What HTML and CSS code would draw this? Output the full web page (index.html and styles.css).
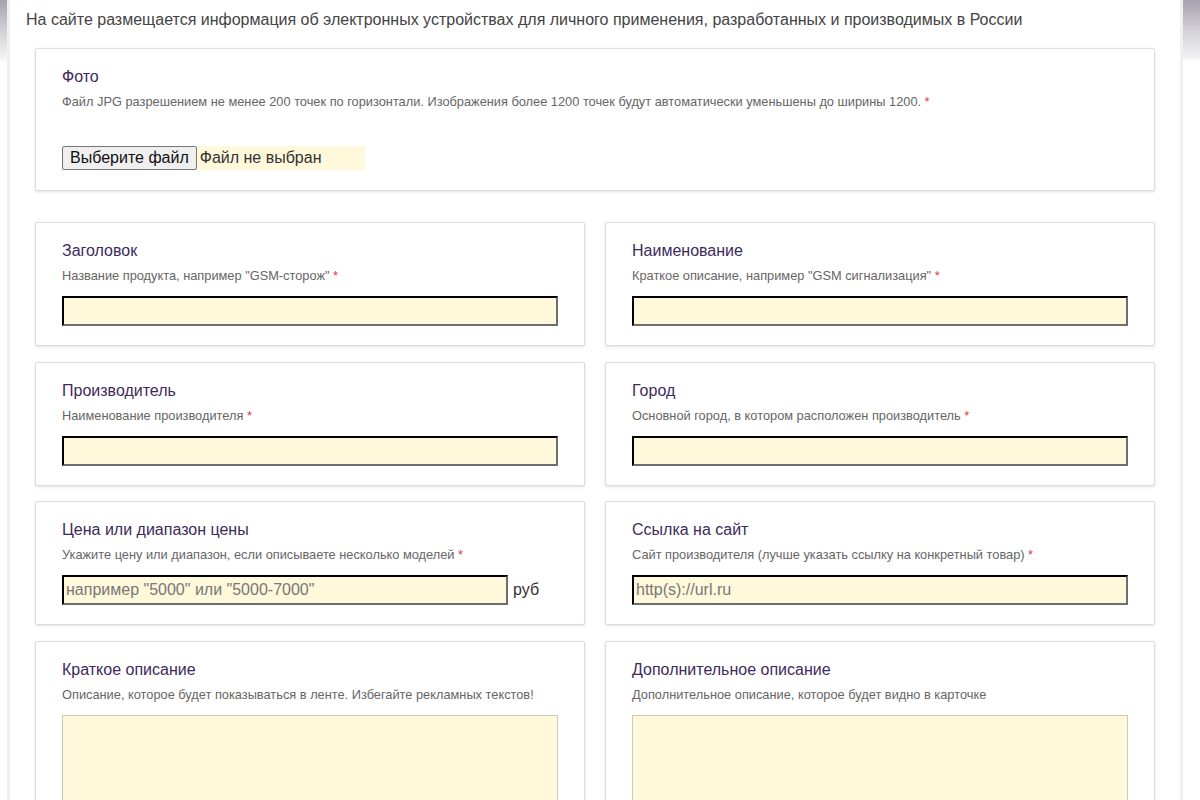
FILE: index.html
```html
<!DOCTYPE html>
<html lang="ru">
<head>
<meta charset="utf-8">
<title>Добавить устройство</title>
<link rel="stylesheet" href="styles.css">
</head>
<body>
<div class="gutter gutter-left"></div>
<main class="page">
  <p class="intro">На сайте размещается информация об электронных устройствах для личного применения, разработанных и производимых в России</p>

  <section class="card card-photo">
    <div class="label">Фото</div>
    <div class="hint">Файл JPG разрешением не менее 200 точек по горизонтали. Изображения более 1200 точек будут автоматически уменьшены до ширины 1200. <span class="req">*</span></div>
    <div class="file">
      <button class="file-btn" type="button">Выберите файл</button><span class="file-name">Файл не выбран</span>
    </div>
  </section>

  <div class="grid">
    <section class="card">
      <div class="label">Заголовок</div>
      <div class="hint">Название продукта, например "GSM-сторож" <span class="req">*</span></div>
      <input class="field" type="text">
    </section>
    <section class="card">
      <div class="label">Наименование</div>
      <div class="hint">Краткое описание, например "GSM сигнализация" <span class="req">*</span></div>
      <input class="field" type="text">
    </section>
    <section class="card">
      <div class="label">Производитель</div>
      <div class="hint">Наименование производителя <span class="req">*</span></div>
      <input class="field" type="text">
    </section>
    <section class="card">
      <div class="label">Город</div>
      <div class="hint">Основной город, в котором расположен производитель <span class="req">*</span></div>
      <input class="field" type="text">
    </section>
    <section class="card">
      <div class="label">Цена или диапазон цены</div>
      <div class="hint">Укажите цену или диапазон, если описываете несколько моделей <span class="req">*</span></div>
      <div class="price-row">
        <input class="field field-price" type="text" placeholder="например &quot;5000&quot; или &quot;5000-7000&quot;"><span class="unit">руб</span>
      </div>
    </section>
    <section class="card">
      <div class="label">Ссылка на сайт</div>
      <div class="hint">Сайт производителя (лучше указать ссылку на конкретный товар) <span class="req">*</span></div>
      <input class="field" type="text" placeholder="http(s)://url.ru">
    </section>
    <section class="card">
      <div class="label">Краткое описание</div>
      <div class="hint">Описание, которое будет показываться в ленте. Избегайте рекламных текстов!</div>
      <textarea class="area"></textarea>
    </section>
    <section class="card">
      <div class="label">Дополнительное описание</div>
      <div class="hint">Дополнительное описание, которое будет видно в карточке</div>
      <textarea class="area"></textarea>
    </section>
  </div>
</main>
<div class="gutter gutter-right"></div>
</body>
</html>
```

FILE: styles.css
```css
* { box-sizing: border-box; }

html, body {
  margin: 0;
  padding: 0;
}

body {
  display: flex;
  background: #fff;
  font-family: "Liberation Sans", Arial, sans-serif;
  color: #333;
  min-height: 800px;
}

.gutter {
  flex: none;
  background:
    linear-gradient(to bottom, #a6a2ae 0, #d2d0d6 30px, #f2f2f4 58px, rgba(255,255,255,0) 62px),
    #fff;
}

.gutter-left {
  width: 10px;
  border-right: 3px solid #f0f0f0;
}

.gutter-right {
  width: 20px;
  border-left: 3px solid #f0f0f0;
}

.page {
  flex: 1;
  padding: 0 25px 0 25px;
  background: #fff;
}

.intro {
  margin: 10px 0 18px -9px;
  font-size: 16px;
  line-height: 20px;
  color: #444;
}

.card {
  background: #fff;
  border: 1px solid #dcdcdc;
  border-radius: 2px;
  box-shadow: 0 1px 3px rgba(0, 0, 0, 0.12);
  padding: 18px 26px 19px 26px;
}

.card-photo {
  padding-bottom: 20px;
  margin-bottom: 31px;
}

.label {
  font-size: 16px;
  line-height: 20px;
  color: #3e2a5c;
}

.hint {
  margin-top: 7px;
  font-size: 12.8px;
  line-height: 16px;
  color: #666;
}

.req {
  color: #e0393e;
}

.file {
  margin-top: 36px;
  display: flex;
  align-items: stretch;
  height: 24px;
}

.file-btn {
  font-family: "Liberation Sans", Arial, sans-serif;
  font-size: 16px;
  color: #111;
  background: #efefef;
  border: 1px solid #767676;
  border-radius: 2px;
  padding: 0 7px;
  height: 24px;
}

.file-name {
  width: 168px;
  background: #fff8db;
  font-size: 16px;
  line-height: 24px;
  color: #333;
  padding-left: 3px;
}

.grid {
  display: grid;
  grid-template-columns: 1fr 1fr;
  column-gap: 20px;
  row-gap: 15.67px;
}

.field {
  display: block;
  margin-top: 12px;
  width: 100%;
  height: 30px;
  background: #fff8db;
  border: 2px inset #767676;
  border-top-color: #1f1f1f;
  border-left-color: #1f1f1f;
  border-right-color: #6e6e6e;
  border-bottom-color: #6e6e6e;
  font-family: "Liberation Sans", Arial, sans-serif;
  font-size: 16px;
  padding: 0 2px;
  color: #333;
}

.field::placeholder {
  color: #777;
}

.price-row {
  display: flex;
  align-items: flex-end;
  margin-top: 12px;
}

.field-price {
  margin-top: 0;
  width: 446px;
}

.unit {
  margin-left: 5px;
  font-size: 16px;
  line-height: 30px;
  color: #333;
}

.area {
  display: block;
  margin-top: 12px;
  width: 100%;
  height: 140px;
  background: #fff8db;
  border: 1px solid #cfc9b5;
  resize: none;
}
```
